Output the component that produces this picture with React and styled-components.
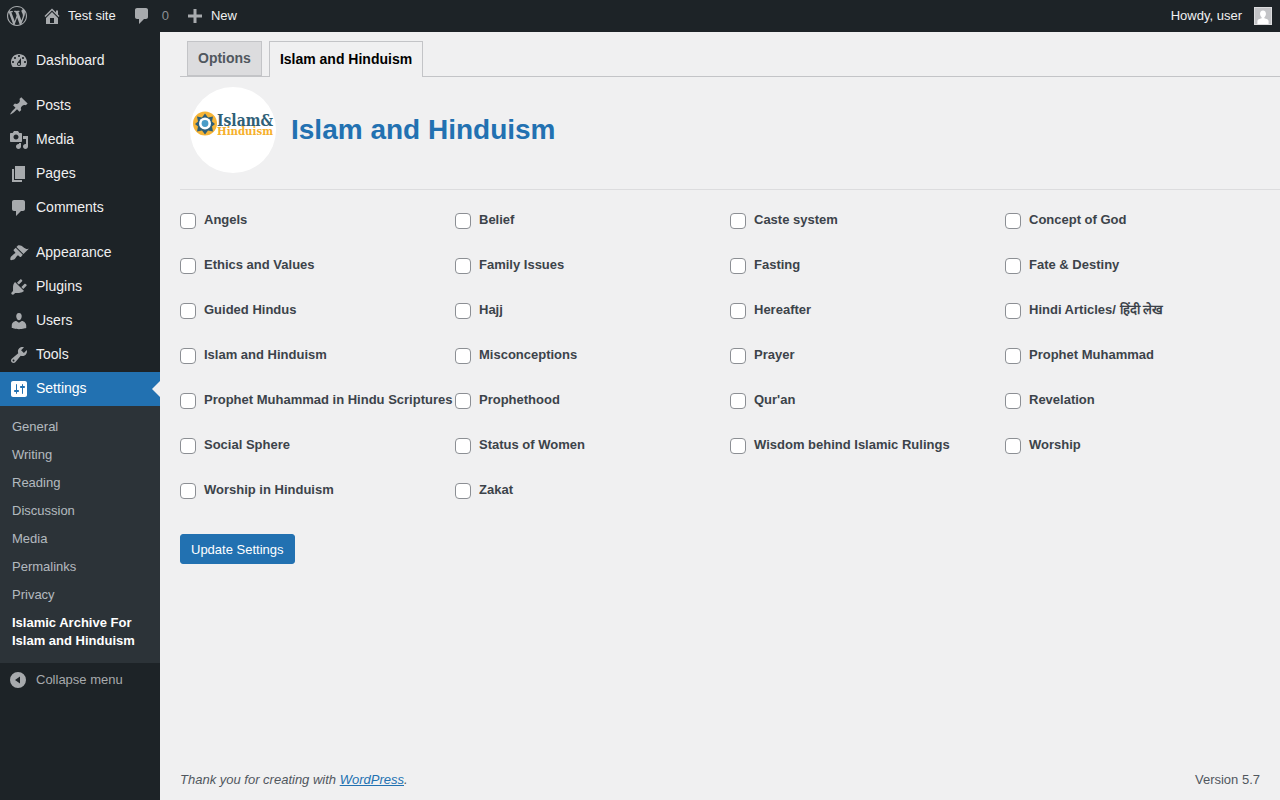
import styled, { createGlobalStyle } from 'styled-components'

const GlobalStyle = createGlobalStyle`
    html, body {
        margin: 0;
        padding: 0;
        height: 100%;
        background: #f0f0f1;
        overflow: hidden;
    }
    body {
        font-family: "Liberation Sans", Arial, sans-serif;
        font-size: 13px;
        line-height: 1.4;
        color: #3c434a;
    }
    * {
        box-sizing: border-box;
    }
`

const icons = {
    wp: 'M20 10c0-5.51-4.49-10-10-10C4.48 0 0 4.49 0 10c0 5.52 4.48 10 10 10 5.51 0 10-4.48 10-10zM7.78 15.37L4.37 6.22c.55-.02 1.17-.08 1.17-.08.5-.06.44-1.13-.06-1.11 0 0-1.45.11-2.37.11-.18 0-.37 0-.58-.01C4.12 2.69 6.87 1.11 10 1.11c2.33 0 4.45.87 6.05 2.34-.68-.11-1.65.39-1.65 1.58 0 .74.45 1.36.9 2.1.35.61.55 1.36.55 2.46 0 1.49-1.4 5-1.4 5l-3.03-8.37c.54-.02.82-.17.82-.17.5-.05.44-1.25-.06-1.22 0 0-1.44.12-2.38.12-.87 0-2.33-.12-2.33-.12-.5-.03-.56 1.2-.06 1.22l.92.08 1.26 3.41zM17.41 10c.24-.64.74-1.87.43-4.25.7 1.29 1.05 2.71 1.05 4.25 0 3.29-1.73 6.24-4.4 7.78.97-2.59 1.94-5.2 2.92-7.78zM6.1 18.09C3.12 16.65 1.11 13.53 1.11 10c0-1.3.23-2.48.72-3.59C3.25 10.3 4.67 14.2 6.1 18.09zm4.03-6.63l2.58 6.98c-.86.29-1.76.45-2.71.45-.79 0-1.57-.11-2.29-.33.81-2.38 1.62-4.74 2.42-7.1z',
    home: 'M16 8.5l1.53 1.53-1.06 1.06L10 4.62l-6.47 6.47-1.06-1.06L10 2.5l4 4v-2h2v4zm-6-2.46l6 5.99V18H4v-5.97zM12 17v-5H8v5h4z',
    comment: 'M5 2h9c1.1 0 2 .9 2 2v7c0 1.1-.9 2-2 2h-2l-5 5v-5H5c-1.1 0-2-.9-2-2V4c0-1.1.9-2 2-2z',
    plus: 'M8.5 3h3v5.5H17v3h-5.5V17h-3v-5.5H3v-3h5.5z',
    dashboard: 'M3.76 16h12.48c1.1-1.37 1.76-3.11 1.76-5 0-4.42-3.58-8-8-8s-8 3.58-8 8c0 1.89.66 3.63 1.76 5zM10 4c.55 0 1 .45 1 1s-.45 1-1 1-1-.45-1-1 .45-1 1-1zM6 6c.55 0 1 .45 1 1s-.45 1-1 1-1-.45-1-1 .45-1 1-1zm8 0c.55 0 1 .45 1 1s-.45 1-1 1-1-.45-1-1 .45-1 1-1zm-5.37 5.55L12 7v6c0 1.1-.9 2-2 2s-2-.9-2-2c0-.57.24-1.08.63-1.45zM4 10c.55 0 1 .45 1 1s-.45 1-1 1-1-.45-1-1 .45-1 1-1zm12 0c.55 0 1 .45 1 1s-.45 1-1 1-1-.45-1-1 .45-1 1-1zm-5 3c0-.55-.45-1-1-1s-1 .45-1 1 .45 1 1 1 1-.45 1-1z',
    posts: 'M10.44 3.02l1.82-1.82 6.36 6.35-1.83 1.82c-1.05-.68-2.48-.57-3.41.36l-.75.75c-.92.93-1.04 2.35-.35 3.41l-1.83 1.82-2.41-2.41-2.8 2.79c-.42.42-3.38 2.71-3.8 2.29s1.86-3.39 2.28-3.81l2.79-2.79L4.1 9.36l1.83-1.82c1.05.69 2.48.57 3.4-.36l.75-.75c.93-.92 1.05-2.35.36-3.41z',
    media: 'M13 11V4c0-.55-.45-1-1-1h-1.67L9 1H5L3.67 3H2c-.55 0-1 .45-1 1v7c0 .55.45 1 1 1h10c.55 0 1-.45 1-1zM7 4.5c1.38 0 2.5 1.12 2.5 2.5S8.38 9.5 7 9.5 4.5 8.38 4.5 7 5.62 4.5 7 4.5zM14 6h5v10.5c0 1.38-1.12 2.5-2.5 2.5S14 17.88 14 16.5s1.12-2.5 2.5-2.5c.17 0 .34.02.5.05V9h-3V6zm-4 8.05V13h2v3.5c0 1.38-1.12 2.5-2.5 2.5S7 17.88 7 16.5 8.12 14 9.5 14c.17 0 .34.02.5.05z',
    pages: 'M6 15V2h10v13H6zm-1 1h8v2H3V5h2v11z',
    appearance: 'M14.48 11.06L7.41 3.99l1.5-1.5c.5-.56 2.3-.47 3.51.32 1.21.8 1.43 1.28 2.91 2.1 1.18.64 2.45 1.26 4.45.85zm-.71.71L6.7 4.7 4.93 6.47c-.39.39-.39 1.02 0 1.41l1.06 1.06c.39.39.39 1.03 0 1.42-.6.6-1.43 1.11-2.21 1.69-.35.26-.7.53-1.01.84C1.43 13.23 1 16.5 1.5 17s3.5-.5 4.23-1.08c.31-.31.58-.66.84-1.01.58-.78 1.09-1.61 1.69-2.21.39-.39 1.03-.39 1.42 0l1.06 1.06c.39.39 1.02.39 1.41 0z',
    plugins: 'M13.11 4.36L9.87 7.6 8 5.73l3.24-3.24c.35-.34 1.05-.2 1.56.32.52.51.66 1.21.31 1.55zm-8 1.77l.91-1.12 9.01 9.01-1.19.84c-.71.71-2.63 1.16-3.82 1.16H6.14L4.9 17.26c-.59.59-1.54.59-2.12 0-.59-.58-.59-1.53 0-2.12l1.24-1.24v-3.88c0-1.13.4-3.19 1.09-3.89zm7.26 3.97l3.24-3.24c.34-.35 1.04-.21 1.55.31.52.51.66 1.21.31 1.55l-3.24 3.25z',
    users: 'M10 9.25c-2.27 0-2.73-3.44-2.73-3.44C7 4.02 7.82 2 9.97 2c2.16 0 2.98 2.02 2.71 3.81 0 0-.41 3.44-2.68 3.44zm0 2.57L12.72 10c2.39 0 4.52 2.33 4.52 4.53v2.49s-3.65 1.13-7.24 1.13c-3.65 0-7.24-1.13-7.24-1.13v-2.49c0-2.25 1.94-4.48 4.47-4.48z',
    tools: 'M16.68 9.77c-1.34 1.34-3.3 1.67-4.95.99l-5.41 6.52c-.99.99-2.59.99-3.58 0s-.99-2.59 0-3.57l6.52-5.42c-.68-1.65-.35-3.61.99-4.95 1.28-1.28 3.12-1.62 4.72-1.06l-2.89 2.89 2.82 2.82 2.86-2.87c.53 1.58.18 3.39-1.08 4.65zM3.81 16.21c.4.39 1.04.39 1.43 0 .4-.4.4-1.04 0-1.43-.39-.4-1.03-.4-1.43 0-.39.39-.39 1.03 0 1.43z',
    settings: 'M18 16V4c0-1.1-.9-2-2-2H4c-1.1 0-2 .9-2 2v12c0 1.1.9 2 2 2h12c1.1 0 2-.9 2-2zM8 11h1c.55 0 1 .45 1 1s-.45 1-1 1H8v1.5c0 .28-.22.5-.5.5s-.5-.22-.5-.5V13H6c-.55 0-1-.45-1-1s.45-1 1-1h1V5.5c0-.28.22-.5.5-.5s.5.22.5.5V11zm5-2h-1c-.55 0-1-.45-1-1s.45-1 1-1h1V5.5c0-.28.22-.5.5-.5s.5.22.5.5V7h1c.55 0 1 .45 1 1s-.45 1-1 1h-1v5.5c0 .28-.22.5-.5.5s-.5-.22-.5-.5V9z',
    collapse: 'M10 2a8 8 0 1 1 0 16 8 8 0 0 1 0-16zm2 4.5L7 10l5 3.5z',
}

const Icon = ({ name, size = 20 }) => (
    <svg width={size} height={size} viewBox="0 0 20 20" fill="currentColor" fillRule="evenodd">
        <path d={icons[name]} />
    </svg>
)

const Page = styled.div`
    display: grid;
    grid-template-columns: 160px 1fr;
    grid-template-rows: 32px 1fr;
    height: 100vh;
`

const TopBar = styled.header`
    grid-column: 1 / 3;
    display: flex;
    justify-content: space-between;
    align-items: center;
    background: #1d2327;
    color: #f0f0f1;
`

const BarGroup = styled.div`
    display: flex;
    align-items: center;
    height: 100%;
`

const BarItem = styled.div`
    display: flex;
    align-items: center;
    gap: ${(p) => p.$gap || 6}px;
    padding: ${(p) => p.$padding || '0 8px'};
    height: 100%;
    color: ${(p) => p.$muted ? '#a7aaad' : '#f0f0f1'};
    svg {
        color: #a7aaad;
        flex: none;
    }
`

const CountText = styled.span`
    color: #8c8f94;
    margin-left: 2px;
`

const Avatar = styled.div`
    width: 18px;
    height: 18px;
    margin-left: 6px;
    background: #c3c4c7;
    border: 1px solid #dcdcde;
    svg {
        display: block;
        color: #fff;
    }
`

const Sidebar = styled.nav`
    background: #1d2327;
    padding-top: 12px;
    color: #f0f0f1;
    font-size: 14px;
`

const MenuItem = styled.div`
    position: relative;
    display: flex;
    align-items: center;
    height: 34px;
    margin-bottom: ${(p) => p.$spaced ? 11 : 0}px;
    padding-left: 7px;
    gap: 7px;
    background: ${(p) => p.$active ? '#2271b1' : 'transparent'};
    color: ${(p) => p.$active ? '#fff' : '#f0f0f1'};
    svg {
        flex: none;
        margin-left: 2px;
        color: ${(p) => p.$active ? '#fff' : '#a7aaad'};
    }
    ${(p) => p.$active && `
        &::after {
            content: '';
            position: absolute;
            right: 0;
            top: 50%;
            margin-top: -8px;
            border: 8px solid transparent;
            border-right-color: #f0f0f1;
        }
    `}
`

const SubMenu = styled.div`
    background: #2c3338;
    padding: 7px 0 8px;
    font-size: 13px;
`

const SubItem = styled.div`
    padding: 5px 12px;
    line-height: 18px;
    color: ${(p) => p.$current ? '#fff' : 'rgba(240, 246, 252, 0.7)'};
    font-weight: ${(p) => p.$current ? 600 : 400};
`

const Collapse = styled.div`
    display: flex;
    align-items: center;
    gap: 8px;
    padding: 7px 0 0 8px;
    font-size: 13px;
    color: #a7aaad;
    svg {
        flex: none;
    }
`

const Main = styled.main`
    display: flex;
    flex-direction: column;
    padding-left: 20px;
    min-width: 0;
`

const TabBar = styled.div`
    display: flex;
    gap: 7px;
    padding: 9px 0 0 7px;
    height: 45px;
    border-bottom: 1px solid #c3c4c7;
`

const Tab = styled.div`
    height: ${(p) => p.$active ? 36 : 35}px;
    padding: 0 10px;
    display: flex;
    align-items: center;
    font-size: 14px;
    font-weight: 600;
    border: 1px solid #c3c4c7;
    border-bottom: ${(p) => p.$active ? '0' : '1px solid #c3c4c7'};
    background: ${(p) => p.$active ? '#f0f0f1' : '#dcdcde'};
    color: ${(p) => p.$active ? '#000' : '#50575e'};
`

const Header = styled.div`
    display: flex;
    align-items: center;
    gap: 15px;
    height: 113px;
    padding: 10px 0 16px 10px;
    border-bottom: 1px solid #dcdcde;
`

const LogoCircle = styled.div`
    width: 86px;
    height: 86px;
    border-radius: 50%;
    background: #fff;
    flex: none;
    svg {
        display: block;
    }
`

const Title = styled.h1`
    margin: 0;
    font-size: 28px;
    line-height: 1.2;
    font-weight: 700;
    color: #2271b1;
`

const Grid = styled.div`
    display: grid;
    grid-template-columns: repeat(4, 275px);
    grid-auto-rows: 45px;
    padding-top: 14px;
`

const Option = styled.label`
    display: flex;
    align-items: flex-start;
    font-weight: 600;
    font-size: 13px;
    line-height: 18px;
    white-space: nowrap;
`

const Check = styled.input.attrs({ type: 'checkbox' })`
    appearance: none;
    width: 16px;
    height: 16px;
    margin: 9px 8px 0 0;
    border: 1px solid #8c8f94;
    border-radius: 4px;
    background: #fff;
    flex: none;
`

const OptionText = styled.span`
    margin-top: 7px;
`

const Button = styled.button`
    align-self: flex-start;
    margin-top: 15px;
    height: 30px;
    padding: 0 10px;
    background: #2271b1;
    color: #fff;
    border: 1px solid #2271b1;
    border-radius: 3px;
    font-family: inherit;
    font-size: 13px;
`

const Footer = styled.footer`
    margin-top: auto;
    display: flex;
    justify-content: space-between;
    padding: 0 20px 11px 0;
    line-height: 18px;
    color: #50575e;
`

const Thanks = styled.span`
    font-style: italic;
    a {
        color: #2271b1;
    }
`

// logo is a picture in the original, redrawn by hand
const Logo = () => (
    <svg width="86" height="86" viewBox="0 0 86 86">
        <circle cx="15" cy="36.5" r="12" fill="#f6b436" />
        <path d="M15 26.5l3 4 5-1-1 5 3 2.5-3 2.5 1 5-5-1-3 4-3-4-5 1 1-5-3-2.5 3-2.5-1-5 5 1z" fill="#2f5f78" />
        <circle cx="15" cy="36.5" r="6" fill="#fff" />
        <circle cx="15" cy="36.5" r="3.4" fill="#4a9cc7" />
        <text x="27" y="39" fontFamily="DejaVu Serif, serif" fontWeight="700" fontSize="17" fill="#2f6077" textLength="56" lengthAdjust="spacingAndGlyphs">Islam&amp;</text>
        <text x="27" y="48" fontFamily="DejaVu Serif, serif" fontWeight="700" fontSize="11" fill="#f6b02c" textLength="56" lengthAdjust="spacingAndGlyphs">Hinduism</text>
    </svg>
)

const menuTop = [
    { icon: 'dashboard', label: 'Dashboard', spaced: true },
    { icon: 'posts', label: 'Posts' },
    { icon: 'media', label: 'Media' },
    { icon: 'pages', label: 'Pages' },
    { icon: 'comment', label: 'Comments', spaced: true },
    { icon: 'appearance', label: 'Appearance' },
    { icon: 'plugins', label: 'Plugins' },
    { icon: 'users', label: 'Users' },
    { icon: 'tools', label: 'Tools' },
]

const subItems = ['General', 'Writing', 'Reading', 'Discussion', 'Media', 'Permalinks', 'Privacy']

const topics = [
    'Angels', 'Belief', 'Caste system', 'Concept of God',
    'Ethics and Values', 'Family Issues', 'Fasting', 'Fate & Destiny',
    'Guided Hindus', 'Hajj', 'Hereafter', 'Hindi Articles/ हिंदी लेख',
    'Islam and Hinduism', 'Misconceptions', 'Prayer', 'Prophet Muhammad',
    'Prophet Muhammad in Hindu Scriptures', 'Prophethood', "Qur'an", 'Revelation',
    'Social Sphere', 'Status of Women', 'Wisdom behind Islamic Rulings', 'Worship',
    'Worship in Hinduism', 'Zakat',
]

const App = () => (
    <>
        <GlobalStyle />
        <Page>
            <TopBar>
                <BarGroup>
                    <BarItem $padding="0 7px">
                        <Icon name="wp" />
                    </BarItem>
                    <BarItem $padding="0 8px 0 8px">
                        <Icon name="home" />
                        <span>Test site</span>
                    </BarItem>
                    <BarItem $gap={8}>
                        <Icon name="comment" />
                        <CountText>0</CountText>
                    </BarItem>
                    <BarItem $gap={6}>
                        <Icon name="plus" />
                        <span>New</span>
                    </BarItem>
                </BarGroup>
                <BarGroup>
                    <BarItem $gap={0}>
                        <span>Howdy, user</span>
                        <Avatar>
                            <svg width="16" height="16" viewBox="0 0 20 20" fill="currentColor">
                                <path d="M10 3c2.4 0 3.9 2 3.7 4.4-.2 2-1 3.4-2 4.2v1.2c2.6.6 5.3 1.6 5.3 3.7V20H3v-3.5c0-2.1 2.700-3.100 5.300-3.700v-1.200c-1-.8-1.800-2.200-2-4.200C6.100 5 7.600 3 10 3z" />
                            </svg>
                        </Avatar>
                    </BarItem>
                </BarGroup>
            </TopBar>
            <Sidebar>
                {menuTop.map((m) => (
                    <MenuItem key={m.label} $spaced={m.spaced}>
                        <Icon name={m.icon} />
                        <span>{m.label}</span>
                    </MenuItem>
                ))}
                <MenuItem $active>
                    <Icon name="settings" />
                    <span>Settings</span>
                </MenuItem>
                <SubMenu>
                    {subItems.map((s) => (
                        <SubItem key={s}>{s}</SubItem>
                    ))}
                    <SubItem $current>
                        Islamic Archive For
                        <br />
                        Islam and Hinduism
                    </SubItem>
                </SubMenu>
                <Collapse>
                    <Icon name="collapse" />
                    <span>Collapse menu</span>
                </Collapse>
            </Sidebar>
            <Main>
                <TabBar>
                    <Tab>Options</Tab>
                    <Tab $active>Islam and Hinduism</Tab>
                </TabBar>
                <Header>
                    <LogoCircle>
                        <Logo />
                    </LogoCircle>
                    <Title>Islam and Hinduism</Title>
                </Header>
                <Grid>
                    {topics.map((t) => (
                        <Option key={t}>
                            <Check />
                            <OptionText>{t}</OptionText>
                        </Option>
                    ))}
                </Grid>
                <Button>Update Settings</Button>
                <Footer>
                    <Thanks>
                        Thank you for creating with <a href="#wp">WordPress</a>.
                    </Thanks>
                    <span>Version 5.7</span>
                </Footer>
            </Main>
        </Page>
    </>
)

export default App
